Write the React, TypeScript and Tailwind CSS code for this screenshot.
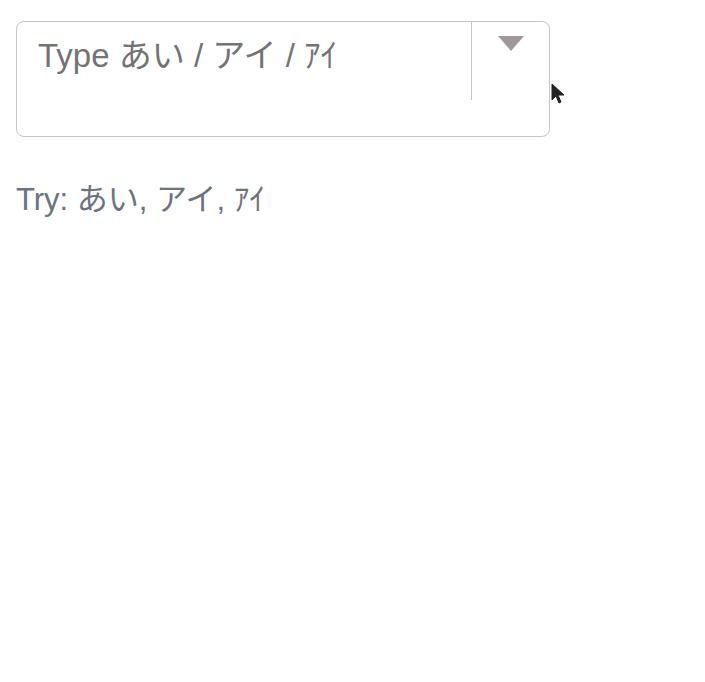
import React from "react";

const App = () => {
  return (
    <div className="min-h-screen bg-white pt-[21px] pl-4" style={{ fontFamily: '"Liberation Sans", Arial, "Noto Sans CJK JP", sans-serif' }}>
      {/* Combobox */}
      <div className="relative w-[534px]">
        <div className="flex h-[116px] w-full rounded-lg border border-[#c4c4c4] bg-white">
          <div className="flex-1 pl-[21px] pt-[14px] text-[33px] leading-[40px] text-[#737373]">
            Type あい / アイ / ｱｲ
          </div>
          <div className="flex h-[78px] w-[78px] justify-center border-l border-[#c4c4c4] pt-[14px]">
            <svg width="26" height="15" viewBox="0 0 26 15">
              <polygon points="0,0 26,0 13,15" fill="#a09898" />
            </svg>
          </div>
        </div>
        {/* mouse pointer */}
        <svg className="absolute left-[535px] top-[62px]" width="14" height="22" viewBox="0 0 14 22">
          <path d="M1 1 L1 17 L5 13 L8 20 L10 19 L7 12 L13 12 Z" fill="#222222" stroke="#222222" strokeWidth="1" />
        </svg>
      </div>

      <p className="mt-[43px] text-[31px] leading-[40px] text-[#6b7280]">Try: あい, アイ, ｱｲ</p>
    </div>
  );
};

export default App;
